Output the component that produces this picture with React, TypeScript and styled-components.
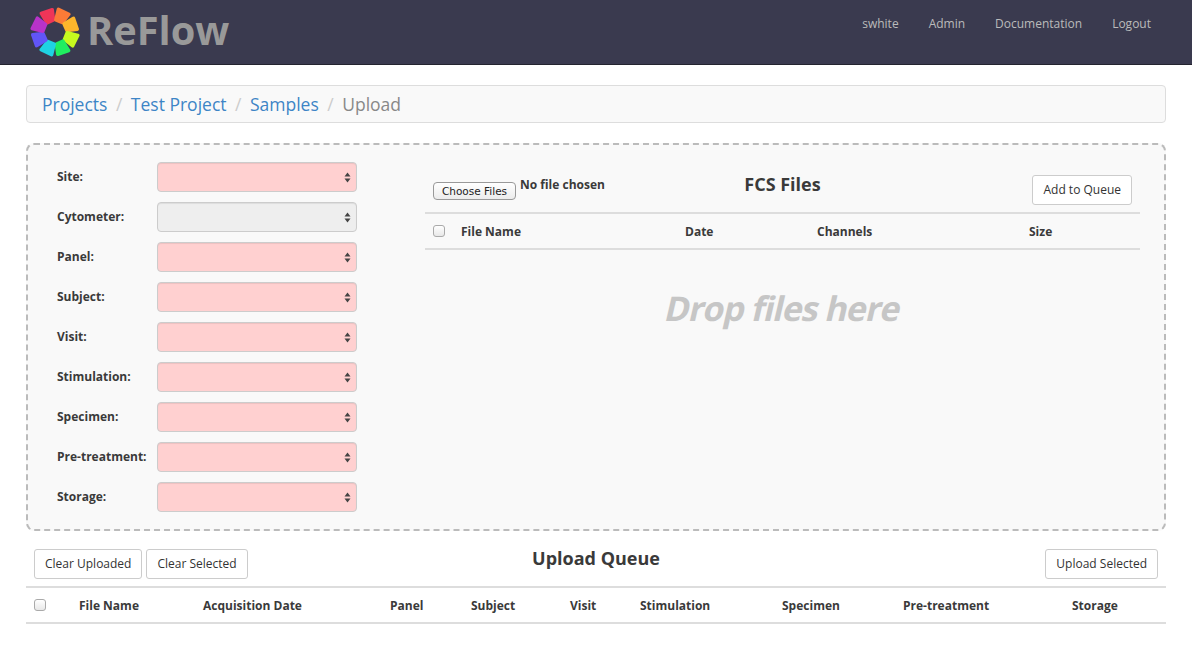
import React from 'react';
import styled, { createGlobalStyle } from 'styled-components';

const GlobalStyle = createGlobalStyle`
  html, body {
    margin: 0;
    padding: 0;
    background: #fff;
    font-family: "Open Sans", "Liberation Sans", sans-serif;
    color: #3a3a3a;
  }
  * { box-sizing: border-box; }
`;

const NavBar = styled.header`
  height: 65px;
  background: #3a3a4f;
  border-bottom: 1px solid #24242f;
  display: flex;
  align-items: center;
  justify-content: space-between;
  padding: 0 26px 0 30px;
`;

const Brand = styled.div`
  display: flex;
  align-items: center;
  gap: 7px;
  font-size: 39.75px;
  font-weight: 700;
  color: #999;
`;

const BrandName = styled.span`
  margin-top: -4px;
`;

const NavLinks = styled.nav`
  display: flex;
  margin-top: -18px;
`;

const NavLink = styled.a`
  font-size: 12px;
  color: #bbb;
  padding: 0 15px;
`;

const Page = styled.main`
  padding: 20px 26px 0;
`;

const Breadcrumb = styled.div`
  height: 38px;
  display: flex;
  align-items: center;
  padding: 0 15px;
  background: #f9f9f9;
  border: 1px solid #ddd;
  border-radius: 4px;
  font-size: 17.5px;
`;

const Crumb = styled.a<{ $active?: boolean }>`
  color: ${p => (p.$active ? '#888' : '#3d85c6')};
`;

const Slash = styled.span`
  color: #ccc;
  padding: 0 8.5px;
`;

const DropPanel = styled.section`
  margin-top: 20px;
  height: 388px;
  background: #f9f9f9;
  border: 2px dashed #bbb;
  border-radius: 8px;
  display: flex;
  padding: 17px 24px 0 29px;
`;

const FormColumn = styled.div`
  width: 300px;
  display: flex;
  flex-direction: column;
  gap: 10px;
  flex-shrink: 0;
`;

const FieldRow = styled.div`
  display: flex;
  align-items: center;
  height: 30px;
`;

const FieldLabel = styled.label`
  width: 100px;
  padding-bottom: 2px;
  font-size: 12px;
  font-weight: 700;
`;

const FakeSelect = styled.div<{ $disabled?: boolean }>`
  width: 200px;
  height: 30px;
  background: ${p => (p.$disabled ? '#eee' : '#ffd0d0')};
  border: 1px solid #ccc;
  border-radius: 4px;
  box-shadow: inset 0 1px 1px rgba(0, 0, 0, 0.075);
  display: flex;
  align-items: center;
  justify-content: flex-end;
  padding-right: 5px;
`;

const FileColumn = styled.div`
  margin-left: 68px;
  width: 715px;
  display: flex;
  flex-direction: column;
`;

const FileToolbar = styled.div`
  position: relative;
  height: 37px;
  margin-top: 13px;
  display: flex;
  justify-content: space-between;
  padding: 0 8px;
`;

const FilePicker = styled.div`
  display: flex;
  align-items: flex-start;
  gap: 4px;
  padding-top: 7px;
  font-size: 12px;
  font-weight: 700;
`;

const ChooseButton = styled.button`
  width: 83px;
  height: 18px;
  padding: 0;
  font: 400 10.5px "DejaVu Sans", sans-serif;
  color: #222;
  background: linear-gradient(#fff, #ececec);
  border: 1px solid #999;
  border-radius: 4px;
`;

const NoFile = styled.span`
  margin-top: -5px;
  line-height: 16px;
`;

const CenterTitle = styled.h3`
  position: absolute;
  left: 0;
  right: 0;
  top: 0;
  margin: 0;
  text-align: center;
  font-size: 18px;
  line-height: 18px;
  font-weight: 700;
  pointer-events: none;
`;

const Button = styled.button`
  height: 30px;
  padding: 0 10px 2px;
  font: 400 12px "Open Sans", sans-serif;
  color: #333;
  background: #fff;
  border: 1px solid #ccc;
  border-radius: 3px;
`;

const HeaderGrid = styled.div<{ $cols: string; $height: number }>`
  display: grid;
  grid-template-columns: ${p => p.$cols};
  align-items: center;
  height: ${p => p.$height}px;
  border-top: 2px solid #ddd;
  border-bottom: 2px solid #ddd;
  font-size: 12px;
  font-weight: 700;
`;

const HeadCell = styled.div`
  text-align: left;
`;

const CheckCell = styled.div`
  display: flex;
  padding-left: 8px;
`;

const Checkbox = styled.span`
  display: block;
  width: 12px;
  height: 12px;
  background: linear-gradient(#fff, #e8e8e8);
  border: 1px solid #aaa;
  border-radius: 3px;
`;

const DropHint = styled.div`
  margin-top: 34px;
  padding-left: 1px;
  text-align: center;
  font-size: 34px;
  line-height: 48px;
  font-weight: 700;
  letter-spacing: -1px;
  color: #c6c6c6;
`;

// the reference has a slanted upright bold, without the true italic's letter forms
const SlantedText = styled.span`
  display: inline-block;
  transform: skewX(-13deg);
`;

const QueueToolbar = styled.div`
  position: relative;
  height: 37px;
  margin-top: 18px;
  display: flex;
  justify-content: space-between;
  padding: 0 8px;
`;

const ButtonGroup = styled.div`
  display: flex;
  gap: 4px;
`;

const labels = ['Site', 'Cytometer', 'Panel', 'Subject', 'Visit', 'Stimulation', 'Specimen', 'Pre-treatment', 'Storage'];

const queueColumns = ['File Name', 'Acquisition Date', 'Panel', 'Subject', 'Visit', 'Stimulation', 'Specimen', 'Pre-treatment', 'Storage'];

const petalColors = ['#ef3558', '#fb7b37', '#fdb62c', '#c6f91f', '#20ee60', '#1fd2e2', '#6155f6', '#b833c9'];

const Logo = () => (
  <svg width="50" height="50" viewBox="-25 -25 50 50">
    {petalColors.map((color, i) => (
      <path
        key={color}
        d="M-3.6 -11.5 L3.6 -11.5 L6.6 -21.5 L-5 -22.5 Z"
        fill={color}
        stroke={color}
        strokeWidth="3.4"
        strokeLinejoin="round"
        transform={`rotate(${i * 45 - 24})`}
      />
    ))}
  </svg>
);

const SelectArrows = () => (
  <svg width="7" height="11" viewBox="0 0 7 11">
    <path d="M3.5 0.5 L6.5 4.5 H0.5 Z M3.5 10.5 L0.5 6.5 H6.5 Z" fill="#444" />
  </svg>
);

const App: React.FC = () => (
  <>
    <GlobalStyle />
    <NavBar>
      <Brand>
        <Logo />
        <BrandName>ReFlow</BrandName>
      </Brand>
      <NavLinks>
        <NavLink>swhite</NavLink>
        <NavLink>Admin</NavLink>
        <NavLink>Documentation</NavLink>
        <NavLink>Logout</NavLink>
      </NavLinks>
    </NavBar>
    <Page>
      <Breadcrumb>
        <Crumb>Projects</Crumb>
        <Slash>/</Slash>
        <Crumb>Test Project</Crumb>
        <Slash>/</Slash>
        <Crumb>Samples</Crumb>
        <Slash>/</Slash>
        <Crumb $active>Upload</Crumb>
      </Breadcrumb>
      <DropPanel>
        <FormColumn>
          {labels.map(label => (
            <FieldRow key={label}>
              <FieldLabel>{label}:</FieldLabel>
              <FakeSelect $disabled={label === 'Cytometer'}>
                <SelectArrows />
              </FakeSelect>
            </FieldRow>
          ))}
        </FormColumn>
        <FileColumn>
          <FileToolbar>
            <FilePicker>
              <ChooseButton>Choose Files</ChooseButton>
              <NoFile>No file chosen</NoFile>
            </FilePicker>
            <CenterTitle>FCS Files</CenterTitle>
            <Button>Add to Queue</Button>
          </FileToolbar>
          <HeaderGrid $cols="36px 224px 132px 212px 1fr" $height={38}>
            <CheckCell><Checkbox /></CheckCell>
            <HeadCell>File Name</HeadCell>
            <HeadCell>Date</HeadCell>
            <HeadCell>Channels</HeadCell>
            <HeadCell>Size</HeadCell>
          </HeaderGrid>
          <DropHint><SlantedText>Drop files here</SlantedText></DropHint>
        </FileColumn>
      </DropPanel>
      <QueueToolbar>
        <ButtonGroup>
          <Button>Clear Uploaded</Button>
          <Button>Clear Selected</Button>
        </ButtonGroup>
        <CenterTitle>Upload Queue</CenterTitle>
        <Button>Upload Selected</Button>
      </QueueToolbar>
      <HeaderGrid $cols="53px 124px 187px 81px 99px 70px 142px 121px 169px 1fr" $height={38}>
        <CheckCell><Checkbox /></CheckCell>
        {queueColumns.map(name => (
          <HeadCell key={name}>{name}</HeadCell>
        ))}
      </HeaderGrid>
    </Page>
  </>
);

export default App;
